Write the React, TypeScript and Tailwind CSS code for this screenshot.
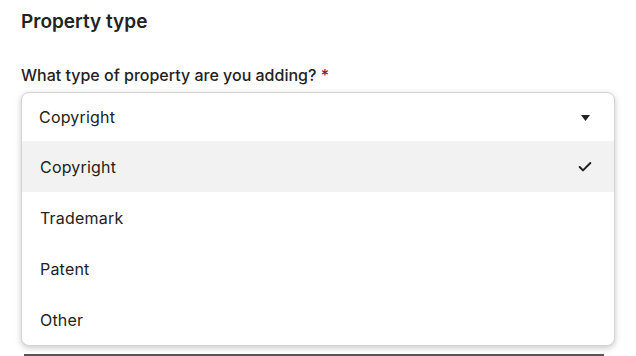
import { Check } from "lucide-react";

const options = ["Copyright", "Trademark", "Patent", "Other"];

export default function App() {
  const selected = "Copyright";

  return (
    <div className="min-h-screen bg-white px-[21px] pt-[7px] font-['Inter',sans-serif] text-[#222222]">
      <h2 className="text-[19px] font-semibold leading-[29px]">Property type</h2>

      <label className="mt-[27px] block text-[16px] font-medium leading-[24px]">
        What type of property are you adding? <span className="text-[#8a1538]">*</span>
      </label>

      <div className="mt-[5px] overflow-hidden rounded-[8px] border border-[#d4d4d4] bg-white shadow-[0_2px_6px_rgba(0,0,0,0.22)]">
        <div className="flex h-[48px] items-center justify-between pl-[17px] pr-[24px]">
          <span className="text-[16px] tracking-[0.2px]">{selected}</span>
          <svg width="9" height="6" viewBox="0 0 9 6" className="mt-[1px]">
            <path d="M0 0 H9 L4.5 6 Z" fill="#222222" />
          </svg>
        </div>
        {options.map((o) => (
          <div
            key={o}
            className={`flex h-[51px] items-center justify-between pl-[18px] pr-[21px] ${
              o === selected ? "bg-[#f2f2f2]" : ""
            }`}
          >
            <span className="text-[16px] tracking-[0.2px]">{o}</span>
            {o === selected && <Check size={16} strokeWidth={3} />}
          </div>
        ))}
      </div>

      <div className="ml-[3px] mr-[11px] mt-[8px] border-t-2 border-[#555555]" />
    </div>
  );
}
